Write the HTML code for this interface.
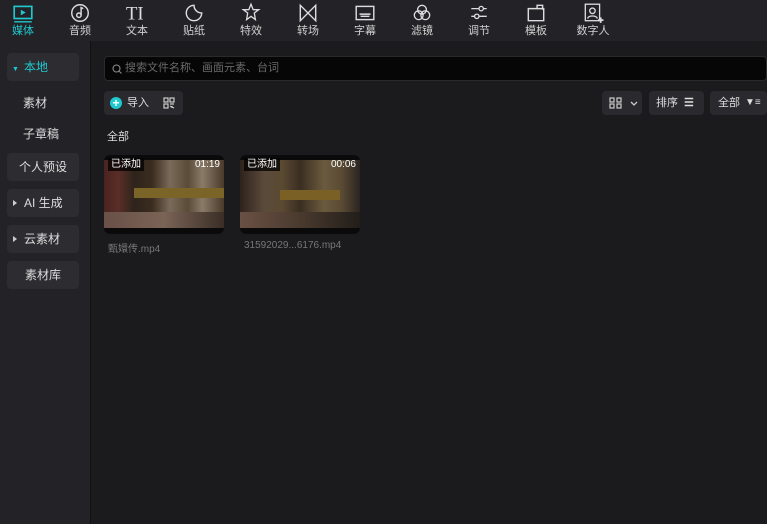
<!DOCTYPE html>
<html><head><meta charset="utf-8"><style>
*{margin:0;padding:0;box-sizing:border-box}
body{width:767px;height:524px;overflow:hidden;background:#1b1b1d;font-family:"Liberation Sans","Noto Sans CJK SC",sans-serif;color:#d8d8d8;font-size:12px;position:relative}
.top{position:absolute;left:0;top:0;width:767px;height:41px;background:#232327}
.tab{position:absolute;top:0;width:50px;text-align:center;font-size:11px;color:#d0d0d0}
.tab svg{display:block;margin:2px auto 0;width:22px;height:22px}
.tab span{display:block;margin-top:0px;line-height:14px}
.side{position:absolute;left:0;top:41px;width:91px;height:483px;background:#232327;border-right:1px solid #111}
.sb{position:absolute;left:7px;width:72px;height:28px;border-radius:4px;background:#2d2d31;font-size:12px;line-height:28px;color:#ddd}
.st{position:absolute;left:23px;font-size:12px;color:#ddd}
.tri{display:inline-block;width:0;height:0;border-left:4px solid #ccc;border-top:3px solid transparent;border-bottom:3px solid transparent;margin:0 7px 1px 6px}
.search{position:absolute;left:104px;top:56px;width:663px;height:25px;background:#060607;border:1px solid #2a2a2d;border-radius:4px;color:#6a6a6a;font-size:11px;line-height:23px;padding-left:20px}
.btn{position:absolute;top:91px;height:24px;background:#2a2a2e;border-radius:4px;font-size:11px;line-height:24px;color:#ddd}
.card{position:absolute;top:155px;width:120px;height:79px;background:#0a0a0a;border-radius:6px;overflow:hidden}
.img{position:absolute;left:0;top:5px;width:120px;height:68px}
.tag{position:absolute;left:4px;top:3px;background:rgba(0,0,0,.75);color:#fff;font-size:10px;padding:0 3px;line-height:13px}
.dur{position:absolute;right:4px;top:3px;color:#fff;font-size:10px;line-height:13px}
.name{position:absolute;top:240px;font-size:10px;color:#777}
</style></head><body>
<div class="top">
<div class="tab" style="left:-2px;color:#1fc8cf"><svg viewBox="0 0 20 20"><rect x="2" y="4" width="16" height="11" fill="none" stroke="#1fc8cf" stroke-width="1.5"/><path d="M8 7v5l4.5-2.5z" fill="#1fc8cf"/><path d="M2 18h16" stroke="#1fc8cf" stroke-width="1.3"/></svg><span>媒体</span></div>
<div class="tab" style="left:55px"><svg viewBox="0 0 20 20" fill="none" stroke="#ddd" stroke-width="1.3"><circle cx="10" cy="10" r="7.5"/><circle cx="9" cy="12" r="2"/><path d="M11 12V5l2 1"/></svg><span>音频</span></div>
<div class="tab" style="left:112px"><svg viewBox="0 0 20 20"><text x="0" y="16" font-family="Liberation Serif" font-size="17" fill="#ddd">TI</text></svg><span>文本</span></div>
<div class="tab" style="left:169px"><svg viewBox="0 0 20 20" fill="none" stroke="#ddd" stroke-width="1.3"><path d="M17 10a7 7 0 1 1-7-7c0 4 3 7 7 7z"/></svg><span>贴纸</span></div>
<div class="tab" style="left:226px"><svg viewBox="0 0 20 20" fill="none" stroke="#ddd" stroke-width="1.2"><path d="M10 2l2 5 5 0-4 3 1 6-4-3-4 3 1-6-4-3 5 0z"/></svg><span>特效</span></div>
<div class="tab" style="left:283px"><svg viewBox="0 0 20 20" fill="none" stroke="#ddd" stroke-width="1.3"><path d="M3 3v14l14-14v14z"/></svg><span>转场</span></div>
<div class="tab" style="left:340px"><svg viewBox="0 0 20 20" fill="none" stroke="#ddd" stroke-width="1.3"><rect x="2" y="4" width="16" height="12"/><path d="M5 11h10M6 13h8"/></svg><span>字幕</span></div>
<div class="tab" style="left:397px"><svg viewBox="0 0 20 20" fill="none" stroke="#ddd" stroke-width="1.2"><circle cx="10" cy="7" r="4"/><circle cx="7" cy="12" r="4"/><circle cx="13" cy="12" r="4"/></svg><span>滤镜</span></div>
<div class="tab" style="left:454px"><svg viewBox="0 0 20 20" fill="none" stroke="#ddd" stroke-width="1.2"><path d="M3 6h14M3 13h14"/><circle cx="12" cy="6" r="2" fill="#232327"/><circle cx="8" cy="13" r="2" fill="#232327"/></svg><span>调节</span></div>
<div class="tab" style="left:511px"><svg viewBox="0 0 20 20" fill="none" stroke="#ddd" stroke-width="1.3"><path d="M3 6h14v11H3zM11 6V3h5v4"/></svg><span>模板</span></div>
<div class="tab" style="left:568px"><svg viewBox="0 0 20 20" fill="none" stroke="#ddd" stroke-width="1.2"><rect x="3" y="2" width="13" height="15"/><circle cx="9.5" cy="8" r="2.5"/><path d="M5 15c1-3 8-3 9 0"/><path d="M17 14v5M14.5 16.5h5" stroke-width="1.6"/></svg><span>数字人</span></div>
</div>
<div class="side">
<div class="sb" style="top:12px;color:#1fc8cf"><span style="font-size:7px;margin:0 5px 0 5px">▼</span>本地</div>
<div class="st" style="top:53px">素材</div>
<div class="st" style="top:84px">子章稿</div>
<div class="sb" style="top:112px;text-align:center">个人预设</div>
<div class="sb" style="top:148px"><span class="tri"></span>AI 生成</div>
<div class="sb" style="top:184px"><span class="tri"></span>云素材</div>
<div class="sb" style="top:220px;text-align:center">素材库</div>
</div>
<div class="search"><svg style="position:absolute;left:7px;top:7px" width="10" height="10" viewBox="0 0 10 10" fill="none" stroke="#888" stroke-width="1.1"><circle cx="4.5" cy="4.5" r="3.5"/><path d="M7 7l2.5 2.5"/></svg>搜索文件名称、画面元素、台词</div>
<div class="btn" style="left:104px;width:79px"><span style="position:absolute;left:6px;top:6px;width:12px;height:12px;border-radius:6px;background:#1fc8cf;color:#fff;font-size:12px;line-height:12px;text-align:center;font-weight:bold">+</span><span style="position:absolute;left:23px">导入</span>
<svg style="position:absolute;left:59px;top:6px" width="12" height="12" viewBox="0 0 12 12" fill="none" stroke="#ccc" stroke-width="1.2"><rect x="1" y="1" width="4" height="4"/><rect x="7" y="1" width="4" height="4"/><rect x="1" y="7" width="4" height="4"/><path d="M7 7h4M7 9l4 2M9 11v-2"/></svg></div>
<div class="btn" style="left:602px;width:40px"><svg style="position:absolute;left:7px;top:6px" width="13" height="12" viewBox="0 0 13 12" fill="none" stroke="#ccc" stroke-width="1.2"><rect x="1" y="1" width="4" height="4"/><rect x="8" y="1" width="4" height="4"/><rect x="1" y="7" width="4" height="4"/><rect x="8" y="7" width="4" height="4"/></svg><svg style="position:absolute;left:28px;top:10px" width="8" height="5" viewBox="0 0 8 5" fill="none" stroke="#ccc" stroke-width="1.3"><path d="M1 1l3 3 3-3"/></svg></div>
<div class="btn" style="left:649px;width:55px;padding-left:7px">排序 <span style="position:absolute;left:35px;font-weight:bold">☰</span></div>
<div class="btn" style="left:710px;width:57px;padding-left:8px">全部 <span style="position:absolute;left:35px;font-weight:bold;font-size:10px">▼≡</span></div>
<div style="position:absolute;left:107px;top:128px;font-size:11px;color:#ddd">全部</div>
<div class="card" style="left:104px"><div class="img" style="background:linear-gradient(90deg,#4a2320 0%,#5a2e28 12%,#2e241c 25%,#3a2c1e 40%,#7a6a5a 55%,#5a4a38 70%,#8a7a68 82%,#4a3a2a 100%)"><div style="position:absolute;left:0;bottom:0;width:100%;height:16px;background:linear-gradient(90deg,#6a5048,#7a6456,#3a2e26)"></div><div style="position:absolute;left:30px;top:28px;width:90px;height:10px;background:#7a6428"></div></div><div class="tag">已添加</div><div class="dur">01:19</div></div>
<div class="card" style="left:240px"><div class="img" style="background:linear-gradient(90deg,#2e221c 0%,#5a4a3a 20%,#5a4a32 35%,#3a2e22 50%,#6a5a3e 70%,#5a4a34 85%,#2a2420 100%)"><div style="position:absolute;left:0;bottom:0;width:100%;height:16px;background:linear-gradient(90deg,#6a5044,#4a3a2e,#221e1a)"></div><div style="position:absolute;left:40px;top:30px;width:60px;height:10px;background:#7a6024"></div></div><div class="tag">已添加</div><div class="dur">00:06</div></div>
<div class="name" style="left:108px">甄嬛传.mp4</div>
<div class="name" style="left:244px">31592029...6176.mp4</div>
</body></html>
